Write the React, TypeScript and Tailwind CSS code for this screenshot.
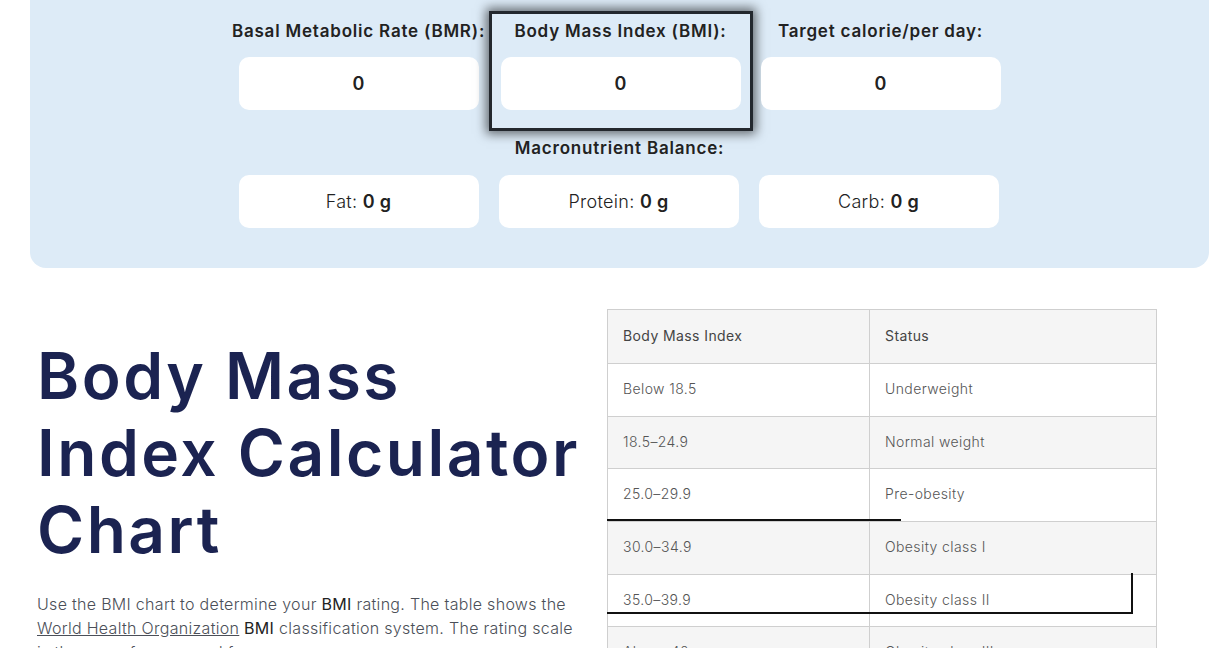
import React from "react";

const font = { fontFamily: "Inter, 'Open Sans', sans-serif" };

const rows = [
  ["Below 18.5", "Underweight"],
  ["18.5–24.9", "Normal weight"],
  ["25.0–29.9", "Pre-obesity"],
  ["30.0–34.9", "Obesity class I"],
  ["35.0–39.9", "Obesity class II"],
  ["Above 40", "Obesity class III"],
];

function ResultColumn({ label, value }: { label: string; value: string }) {
  return (
    <div className="flex w-[240px] flex-col items-center">
      <div className="h-[24px] whitespace-nowrap text-[17px] font-semibold leading-[24px] tracking-[0.8px] text-[#222]">
        {label}
      </div>
      <div className="mt-[14px] flex h-[53px] w-[240px] items-center justify-center rounded-[10px] bg-white text-[18px] font-semibold text-[#222]">
        {value}
      </div>
    </div>
  );
}

function MacroBox({ label }: { label: string }) {
  return (
    <div className="flex h-[53px] w-[240px] items-center justify-center rounded-[10px] bg-white text-[18px] tracking-[0.3px] text-[#222]">
      <span className="font-light">{label}:&nbsp;</span>
      <span className="font-semibold">0 g</span>
    </div>
  );
}

export default function App() {
  return (
    <div className="h-[648px] w-[1216px] overflow-hidden bg-white" style={font}>
      {/* Results panel */}
      <section className="ml-[30px] h-[268px] w-[1179px] rounded-b-2xl bg-[#ddebf7]">
        <div className="flex justify-center pt-[11px]">
          <div className="mt-[8px]">
            <ResultColumn label="Basal Metabolic Rate (BMR):" value="0" />
          </div>
          <div className="ml-[10px] mr-[8px] border-[3px] border-[#23282e] px-[9px] pb-[18px] pt-[5px] shadow-[0_0_10px_3px_rgba(0,0,0,0.55)]">
            <ResultColumn label="Body Mass Index (BMI):" value="0" />
          </div>
          <div className="mt-[8px]">
            <ResultColumn label="Target calorie/per day:" value="0" />
          </div>
        </div>
        <div className="mt-[5px] text-center text-[17px] font-semibold leading-[24px] tracking-[0.8px] text-[#222]">
          Macronutrient Balance:
        </div>
        <div className="ml-[-2px] mt-[15px] flex justify-center gap-[20px]">
          <MacroBox label="Fat" />
          <MacroBox label="Protein" />
          <MacroBox label="Carb" />
        </div>
      </section>

      {/* Chart section */}
      <section className="flex pl-[37px] pt-[41px]">
        <div className="w-[560px] pt-[28px]">
          <h1 className="text-[64px] font-semibold leading-[77px] tracking-[2.5px] text-[#1b2351]">
            Body Mass
            <br />
            Index Calculator
            <br />
            Chart
          </h1>
          <p className="mt-[24px] w-[548px] text-[16px] font-light leading-[24px] tracking-[0.3px] text-[#4b4f58]">
            Use the BMI chart to determine your <span className="font-normal text-[#222]">BMI</span> rating. The table shows the{" "}
            <a className="underline">World Health Organization</a>{" "}
            <span className="font-normal text-[#222]">BMI</span> classification system. The rating scale is the same for men and for women.
          </p>
        </div>
        <div className="relative ml-[10px] w-[550px]">
          <div className="border border-[#cfcfcf] text-[14px] font-light tracking-[0.4px] text-[#555]">
            <div className="grid h-[53px] grid-cols-[262px_1fr] bg-[#f5f5f5] text-[#444]">
              <div className="flex items-center border-r border-[#cfcfcf] pb-[3px] pl-[15px] font-normal">Body Mass Index</div>
              <div className="flex items-center pb-[3px] pl-[15px] font-normal">Status</div>
            </div>
            {rows.map(([bmi, status], i) => (
              <div
                key={bmi}
                className={`grid h-[52.7px] grid-cols-[262px_1fr] border-t border-[#cfcfcf] ${
                  i % 2 === 0 ? "bg-white" : "bg-[#f5f5f5]"
                }`}
              >
                <div className="flex items-center border-r border-[#cfcfcf] pb-[3px] pl-[15px]">{bmi}</div>
                <div className="flex items-center pb-[3px] pl-[15px]">{status}</div>
              </div>
            ))}
          </div>
          {/* stray outlines drawn over the table */}
          <div className="absolute left-0 top-[210px] h-[2px] w-[294px] bg-[#111]" />
          <div className="absolute left-0 top-[264px] h-[41px] w-[526px] border-b-2 border-r-2 border-[#111]" />
        </div>
      </section>
    </div>
  );
}
